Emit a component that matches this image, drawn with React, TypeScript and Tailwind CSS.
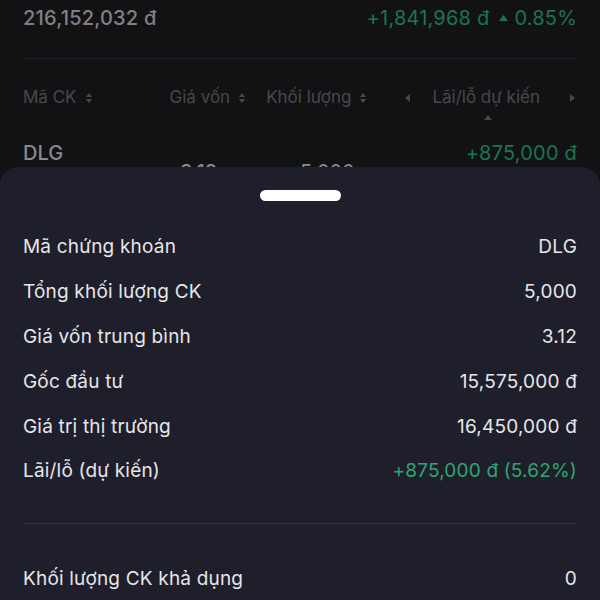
import React from 'react'

// Bottom sheet "chi tiết danh mục" mở trên màn hình danh mục đầu tư (đã bị làm tối).

const rows = [
  { label: 'Mã chứng khoán', value: 'DLG' },
  { label: 'Tổng khối lượng CK', value: '5,000' },
  { label: 'Giá vốn trung bình', value: '3.12' },
  { label: 'Gốc đầu tư', value: '15,575,000 đ' },
  { label: 'Giá trị thị trường', value: '16,450,000 đ' },
]

function SortIcon() {
  return (
    <svg width="8" height="12" viewBox="0 0 8 12" className="ml-2 inline-block">
      <path d="M4 1 L7 5 H1 Z" fill="currentColor" />
      <path d="M4 11 L7 7 H1 Z" fill="currentColor" />
    </svg>
  )
}

function Caret({ dir }: { dir: 'left' | 'right' | 'up' }) {
  const d =
    dir === 'left' ? 'M2 5 L7 1 V9 Z' : dir === 'right' ? 'M8 5 L3 1 V9 Z' : 'M5 2 L9 7 H1 Z'
  return (
    <svg width="10" height="10" viewBox="0 0 10 10">
      <path d={d} fill="currentColor" />
    </svg>
  )
}

export default function App() {
  return (
    <div
      className="flex h-[600px] w-[600px] flex-col overflow-hidden bg-[#121215]"
      style={{ fontFamily: 'Inter, "Noto Sans", sans-serif' }}
    >
      {/* Màn hình phía sau, đã bị phủ tối */}
      <div className="h-[167px] shrink-0 overflow-hidden px-[23px]">
        <div className="flex items-center justify-between pt-[6px] text-[20px] leading-6">
          <span className="font-medium tracking-[0.01em] text-[#808084]">216,152,032 đ</span>
          <span className="flex items-center gap-2.5 tracking-[0.01em] text-[#1c7450]">
            +1,841,968 đ
            <span className="flex items-center gap-1.5">
              <svg width="9" height="6" viewBox="0 0 9 6">
                <path d="M4.5 0 L9 6 H0 Z" fill="currentColor" />
              </svg>
              0.85%
            </span>
          </span>
        </div>
        <div className="mt-[28px] h-px bg-[#202024]" />
        <div className="mt-[28px] flex h-[22px] items-center text-[17px] text-[#48484c]">
          <span className="flex items-center">
            Mã CK
            <SortIcon />
          </span>
          <span className="ml-auto flex items-center">
            Giá vốn
            <SortIcon />
          </span>
          <span className="ml-[20px] flex items-center">
            Khối lượng
            <SortIcon />
          </span>
          <span className="ml-[36px]">
            <Caret dir="left" />
          </span>
          <span className="ml-[19px]">Lãi/lỗ dự kiến</span>
          <span className="ml-[27px]">
            <Caret dir="right" />
          </span>
        </div>
        <div className="flex justify-end pr-[84px] pt-[4px] text-[#48484c]">
          <Caret dir="up" />
        </div>
        <div className="relative mt-[18px] flex items-start justify-between text-[20px] leading-6">
          <span className="font-medium text-[#8a8a8e]">DLG</span>
          <span className="absolute left-[157px] top-[19px] font-medium text-[#8a8a8e]">3.12</span>
          <span className="absolute left-[277px] top-[19px] text-[#8a8a8e]">5,000</span>
          <span className="tracking-[0.01em] text-[#1c7450]">+875,000 đ</span>
        </div>
      </div>

      {/* Bottom sheet */}
      <div className="flex flex-1 flex-col rounded-t-[18px] bg-[#1f1f2b] px-[23px] pt-[23px]">
        <div className="mx-auto h-[11px] w-[81px] rounded-full bg-white" />
        <div className="mt-[24px] flex flex-col">
          {rows.map((r) => (
            <div key={r.label} className="flex h-[45px] items-center justify-between text-[19px] tracking-[0.01em] text-[#e6e6ea]">
              <span>{r.label}</span>
              <span>{r.value}</span>
            </div>
          ))}
          <div className="flex h-[43px] items-center justify-between text-[19px] tracking-[0.01em]">
            <span className="text-[#e6e6ea]">Lãi/lỗ (dự kiến)</span>
            <span className="text-[#2ea673]">+875,000 đ (5.62%)</span>
          </div>
        </div>
        <div className="mt-[30px] h-px bg-[#34344a]" />
        <div className="mt-[33px] flex h-[45px] items-center justify-between text-[19px] tracking-[0.01em] text-[#e6e6ea]">
          <span>Khối lượng CK khả dụng</span>
          <span>0</span>
        </div>
      </div>
    </div>
  )
}
